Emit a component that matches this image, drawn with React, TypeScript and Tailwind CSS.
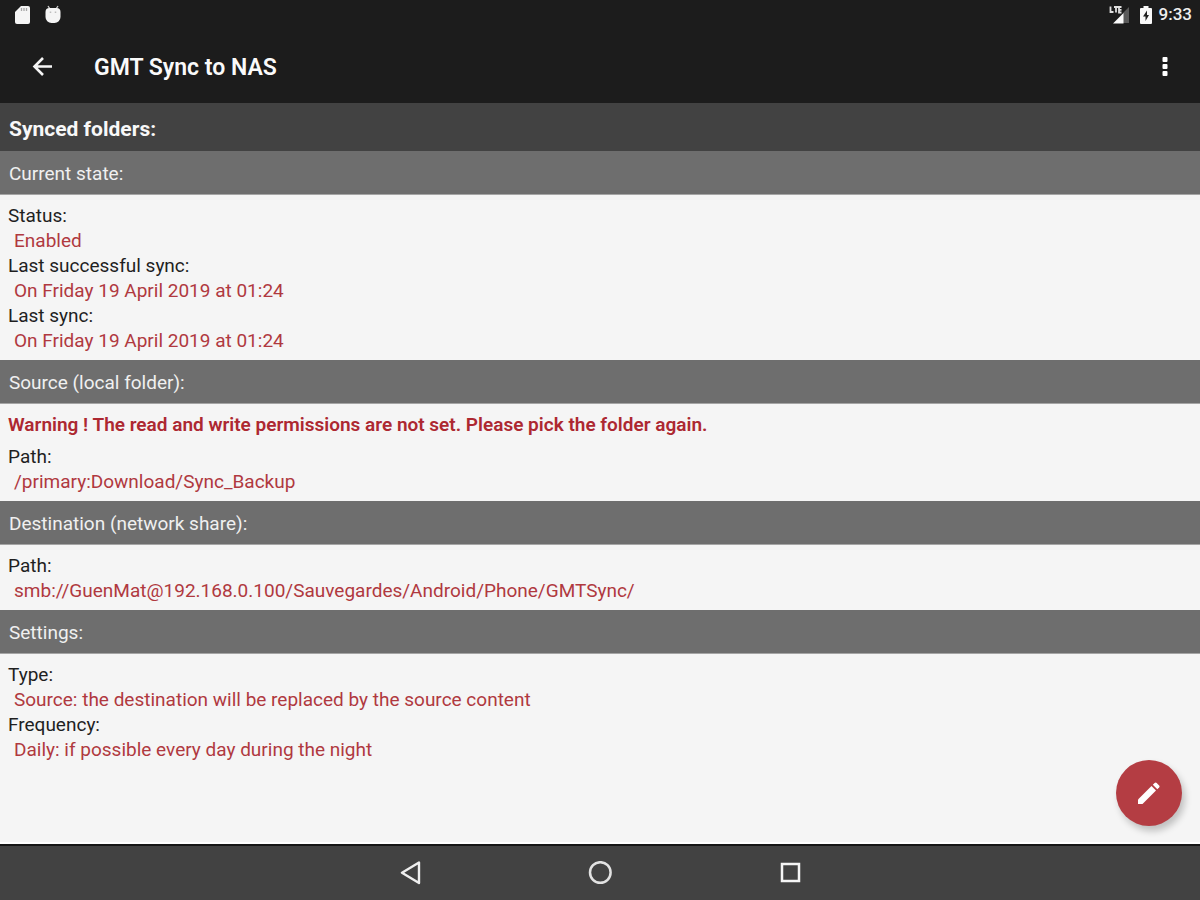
import React from "react";

type Entry = { label: string; value: string };

function SectionTitle({ children }: { children: React.ReactNode }) {
  return (
    <h3 className="flex h-11 items-center border-b border-[#a5a5a5] bg-[#6e6e6e] px-[9px] pt-1 text-[19px] text-[#f0f0f0]">
      {children}
    </h3>
  );
}

function Section({ title, warning, entries }: { title: string; warning?: string; entries: Entry[] }) {
  return (
    <section>
      <SectionTitle>{title}</SectionTitle>
      <div className="px-2 pt-2 pb-[7px] text-[19px] leading-[25px]">
        {warning && <p className="mb-[7px] font-semibold text-[#ad2831]">{warning}</p>}
        <dl>
          {entries.map((entry) => (
            <div key={entry.label}>
              <dt className="text-[#1f1f1f]">{entry.label}</dt>
              <dd className="pl-1.5 text-[#b0393f]">{entry.value}</dd>
            </div>
          ))}
        </dl>
      </div>
    </section>
  );
}

function StatusBar() {
  return (
    <div className="flex h-[30px] items-center justify-between pr-2 pl-[14px]">
      <div className="flex items-center gap-3">
        <svg width="18" height="20" viewBox="0 0 18 20" aria-hidden="true">
          <path d="M7 1h7a2 2 0 0 1 2 2v14a2 2 0 0 1-2 2H3a2 2 0 0 1-2-2V7z" fill="#f5f5f5" />
          <path d="M7.500 3v3M10 3v3M12.500 3v3" stroke="#a8a8a8" strokeWidth="1.300" />
        </svg>
        <svg width="18" height="20" viewBox="0 0 18 20" aria-hidden="true">
          <path d="M4 1l2 3M14 1l-2 3" stroke="#d0d0d0" strokeWidth="1.300" />
          <path d="M1.500 7a4 4 0 0 1 4-4h7a4 4 0 0 1 4 4v5a6 6 0 0 1-6 6h-3a6 6 0 0 1-6-6z" fill="#f5f5f5" />
          <path d="M6.500 6.500v1.500M11.500 6.500v1.500" stroke="#bdbdbd" strokeWidth="1.500" />
        </svg>
      </div>
      <div className="flex items-center">
        <svg width="22" height="20" viewBox="0 0 22 20" aria-hidden="true">
          <path d="M20 2v16h-6V8z" fill="#5a5a5a" />
          <path d="M4 18.500L14.500 8v10.500z" fill="#fafafa" />
          <path d="M1.500 1.500v5.500h3M5 2h4.500M7 2v5.500M12.500 2h-2.500v5.500h2.500M10 4.800h2.500" fill="none" stroke="#e0e0e0" strokeWidth="1.800" />
        </svg>
        <svg className="ml-2" width="14" height="20" viewBox="0 0 14 20" aria-hidden="true">
          <path d="M4.500 1h5v2H12a1 1 0 0 1 1 1v14a1 1 0 0 1-1 1H2a1 1 0 0 1-1-1V4a1 1 0 0 1 1-1h2.500z" fill="#f8f8f8" />
          <path d="M8 5.500L4 11.500h2.500V16L10 10H8z" fill="#1d1d1d" />
        </svg>
        <time className="ml-[6px] text-[17px] font-medium text-[#eeeeee]">9:33</time>
      </div>
    </div>
  );
}

function AppBar() {
  return (
    <header className="flex h-[73px] items-center pr-[23px] pl-[31px]">
      <button type="button" aria-label="Back" className="grid h-6 w-6 place-items-center">
        <svg width="24" height="24" viewBox="0 0 24 24" fill="none" stroke="#f5f5f5" strokeWidth="2.600" aria-hidden="true">
          <path d="M21 11.500H4M12 3L3.500 11.500L12 20" />
        </svg>
      </button>
      <h1 className="ml-[39px] flex-1 pt-1 text-[23px] font-semibold text-[#fafafa]">GMT Sync to NAS</h1>
      <button type="button" aria-label="More options" className="grid h-6 w-6 place-items-center">
        <svg width="24" height="24" viewBox="0 0 24 24" fill="#ffffff" aria-hidden="true">
          <rect x="9.500" y="2" width="5" height="5" rx="1" />
          <rect x="9.500" y="9" width="5" height="5" rx="1" />
          <rect x="9.500" y="16" width="5" height="5" rx="1" />
        </svg>
      </button>
    </header>
  );
}

function NavigationBar() {
  return (
    <nav className="flex h-14 items-center justify-center gap-[166px] border-t-2 border-[#161616] bg-[#424242]">
      <button type="button" aria-label="Back" className="h-6 w-6">
        <svg width="24" height="24" viewBox="0 0 24 24" fill="none" stroke="#efefef" strokeWidth="2.400" strokeLinejoin="round" aria-hidden="true">
          <path d="M21 1.500v20.500L4 11.700z" />
        </svg>
      </button>
      <button type="button" aria-label="Home" className="h-6 w-6">
        <svg width="24" height="24" viewBox="0 0 24 24" fill="none" stroke="#e2e2e2" strokeWidth="2.500" aria-hidden="true">
          <circle cx="12.300" cy="11.500" r="10.300" />
        </svg>
      </button>
      <button type="button" aria-label="Recent apps" className="h-6 w-6">
        <svg width="24" height="24" viewBox="0 0 24 24" fill="none" stroke="#f5f5f5" strokeWidth="2.500" aria-hidden="true">
          <rect x="4" y="3" width="17" height="17" />
        </svg>
      </button>
    </nav>
  );
}

export default function App() {
  return (
    <div className="flex min-h-screen flex-col bg-[#f5f5f5] font-['Roboto',sans-serif]">
      <div className="bg-[#1c1c1c]">
        <StatusBar />
        <AppBar />
      </div>
      <main className="relative flex-1 border-b-2 border-white">
        <h2 className="flex h-12 items-center bg-[#424242] px-[9px] pt-1.5 text-[21px] font-bold text-[#f8f8f8]">
          Synced folders:
        </h2>
        <Section
          title="Current state:"
          entries={[
            { label: "Status:", value: "Enabled" },
            { label: "Last successful sync:", value: "On Friday 19 April 2019 at 01:24" },
            { label: "Last sync:", value: "On Friday 19 April 2019 at 01:24" },
          ]}
        />
        <Section
          title="Source (local folder):"
          warning="Warning ! The read and write permissions are not set. Please pick the folder again."
          entries={[{ label: "Path:", value: "/primary:Download/Sync_Backup" }]}
        />
        <Section
          title="Destination (network share):"
          entries={[{ label: "Path:", value: "smb://GuenMat@192.168.0.100/Sauvegardes/Android/Phone/GMTSync/" }]}
        />
        <Section
          title="Settings:"
          entries={[
            { label: "Type:", value: "Source: the destination will be replaced by the source content" },
            { label: "Frequency:", value: "Daily: if possible every day during the night" },
          ]}
        />
        <button
          type="button"
          aria-label="Edit"
          className="absolute right-[18px] bottom-4 grid h-[66px] w-[66px] place-items-center rounded-full bg-[#b43d43] shadow-[3px_5px_7px_rgba(0,0,0,0.22)]"
        >
          <svg width="26" height="26" viewBox="0 0 26 26" fill="#ffffff" aria-hidden="true">
            <path d="M2 19.500L15.500 6l4.500 4.500L6.500 24H2z" />
            <path d="M16.800 4.800l1.800-1.800a1.500 1.500 0 0 1 2.100 0l2.400 2.400a1.500 1.500 0 0 1 0 2.100l-1.800 1.800z" />
          </svg>
        </button>
      </main>
      <NavigationBar />
    </div>
  );
}
